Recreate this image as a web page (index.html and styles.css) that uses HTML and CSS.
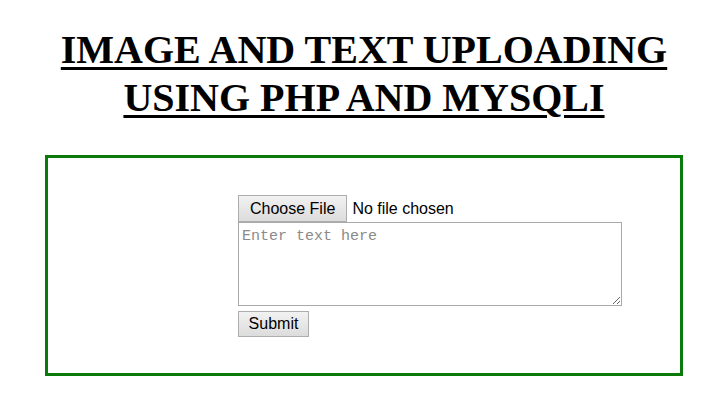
FILE: index.html
```html
<!DOCTYPE html>
<html>
<head>
<meta charset="utf-8">
<link rel="stylesheet" href="styles.css">
</head>
<body>
<div class="page">
  <h1 class="title">IMAGE AND TEXT UPLOADING<br>USING PHP AND MYSQLI</h1>
  <div class="box">
    <form class="form">
      <input class="file" type="file">
      <textarea class="text" placeholder="Enter text here"></textarea>
      <button class="submit" type="button">Submit</button>
    </form>
  </div>
</div>
</body>
</html>
```
FILE: styles.css
```css
html, body {
  margin: 0;
  padding: 0;
  background: #fff;
}
.page {
  padding: 26px 22px 0 45px;
}
.title {
  margin: 0;
  font-family: "Liberation Serif", "Times New Roman", serif;
  font-weight: bold;
  font-size: 40px;
  line-height: 48px;
  text-align: center;
  text-decoration: underline;
  text-decoration-thickness: 3px;
  text-underline-offset: 4px;
  color: #000;
}
.box {
  margin-top: 33px;
  width: 632px;
  height: 215px;
  border: 3px solid #0a7a0a;
  box-sizing: content-box;
}
.form {
  display: flex;
  flex-direction: column;
  align-items: flex-start;
  padding: 37px 0 0 190px;
}
.file {
  font-family: "Liberation Sans", Arial, sans-serif;
  font-size: 16px;
  height: 27px;
  margin: 0;
}
.file::file-selector-button {
  font-family: "Liberation Sans", Arial, sans-serif;
  font-size: 16px;
  height: 27px;
  padding: 1px 11px;
  margin-right: 5px;
  border: 1px solid #adadad;
  border-radius: 0;
  background: linear-gradient(#f2f2f2, #dcdcdc);
  color: #000;
}
.text {
  margin: 0;
  width: 384px;
  height: 84px;
  box-sizing: border-box;
  border: 1px solid #a9a9a9;
  padding: 5px 3px 2px;
  font-family: "Liberation Mono", "DejaVu Sans Mono", monospace;
  font-size: 15px;
  resize: both;
}
.text::placeholder {
  color: #8a8a8a;
}
.submit {
  margin-top: 5px;
  height: 26px;
  width: 71px;
  padding: 0;
  font-family: "Liberation Sans", Arial, sans-serif;
  font-size: 16px;
  border: 1px solid #adadad;
  border-radius: 0;
  background: linear-gradient(#f2f2f2, #dcdcdc);
  color: #000;
}
```
